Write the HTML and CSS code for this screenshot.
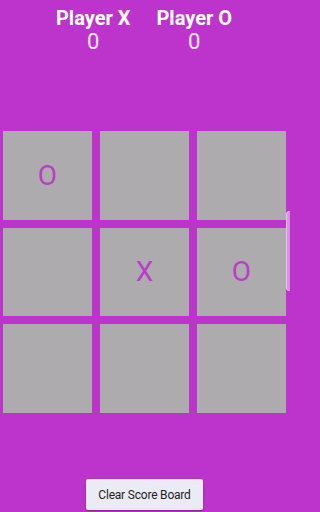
FILE: index.html
```html
<!DOCTYPE html>
<html>
<head>
<meta charset="utf-8">
<link rel="stylesheet" href="styles.css">
</head>
<body>
<div class="screen">
  <div class="scores">
    <div class="player">
      <div class="name">Player X</div>
      <div class="score">0</div>
    </div>
    <div class="player">
      <div class="name">Player O</div>
      <div class="score">0</div>
    </div>
  </div>
  <div class="board">
    <div class="cell">O</div>
    <div class="cell"></div>
    <div class="cell"></div>
    <div class="cell"></div>
    <div class="cell">X</div>
    <div class="cell">O</div>
    <div class="cell"></div>
    <div class="cell"></div>
    <div class="cell"></div>
  </div>
  <div class="actions">
    <button class="clear">Clear Score Board</button>
  </div>
  <div class="edge-handle"></div>
</div>
</body>
</html>
```
FILE: styles.css
```css
html, body {
  margin: 0;
  padding: 0;
}
body {
  background: #bd34cc;
  font-family: Roboto, "Liberation Sans", sans-serif;
}
.screen {
  position: relative;
  width: 290px;
  height: 512px;
  display: flex;
  flex-direction: column;
  overflow: hidden;
}
.scores {
  display: flex;
  justify-content: center;
  gap: 26px;
  padding-top: 7px;
  padding-right: 2px;
}
.player {
  display: flex;
  flex-direction: column;
  align-items: center;
  color: #ffffff;
}
.name {
  font-size: 20px;
  font-weight: 700;
  line-height: 22px;
}
.score {
  font-size: 22px;
  font-weight: 400;
  line-height: 26px;
  color: #f6eaf8;
}
.board {
  margin-top: 76px;
  padding: 0 4px 0 3px;
  display: grid;
  grid-template-columns: repeat(3, 1fr);
  grid-template-rows: repeat(3, 88.5px);
  gap: 8px;
}
.cell {
  background: #adabad;
  color: #bb3dcb;
  font-size: 28px;
  display: flex;
  align-items: center;
  justify-content: center;
}
.actions {
  margin-top: auto;
  margin-bottom: 2px;
  display: flex;
  justify-content: center;
  padding-right: 1px;
}
.clear {
  width: 117px;
  height: 31px;
  border: none;
  border-radius: 2px;
  background: #ebebf5;
  color: #1e1e22;
  font-family: Roboto, "Liberation Sans", sans-serif;
  font-size: 12px;
  letter-spacing: -0.2px;
  padding: 0;
  box-shadow: 0 1px 2px rgba(60, 0, 70, 0.45);
}
.edge-handle {
  position: absolute;
  right: 0;
  top: 211px;
  width: 4px;
  height: 80px;
  border-radius: 4px 0 0 4px;
  background: #d98fe3;
  box-shadow: inset 1px 0 0 #ecc4f0;
}
```
